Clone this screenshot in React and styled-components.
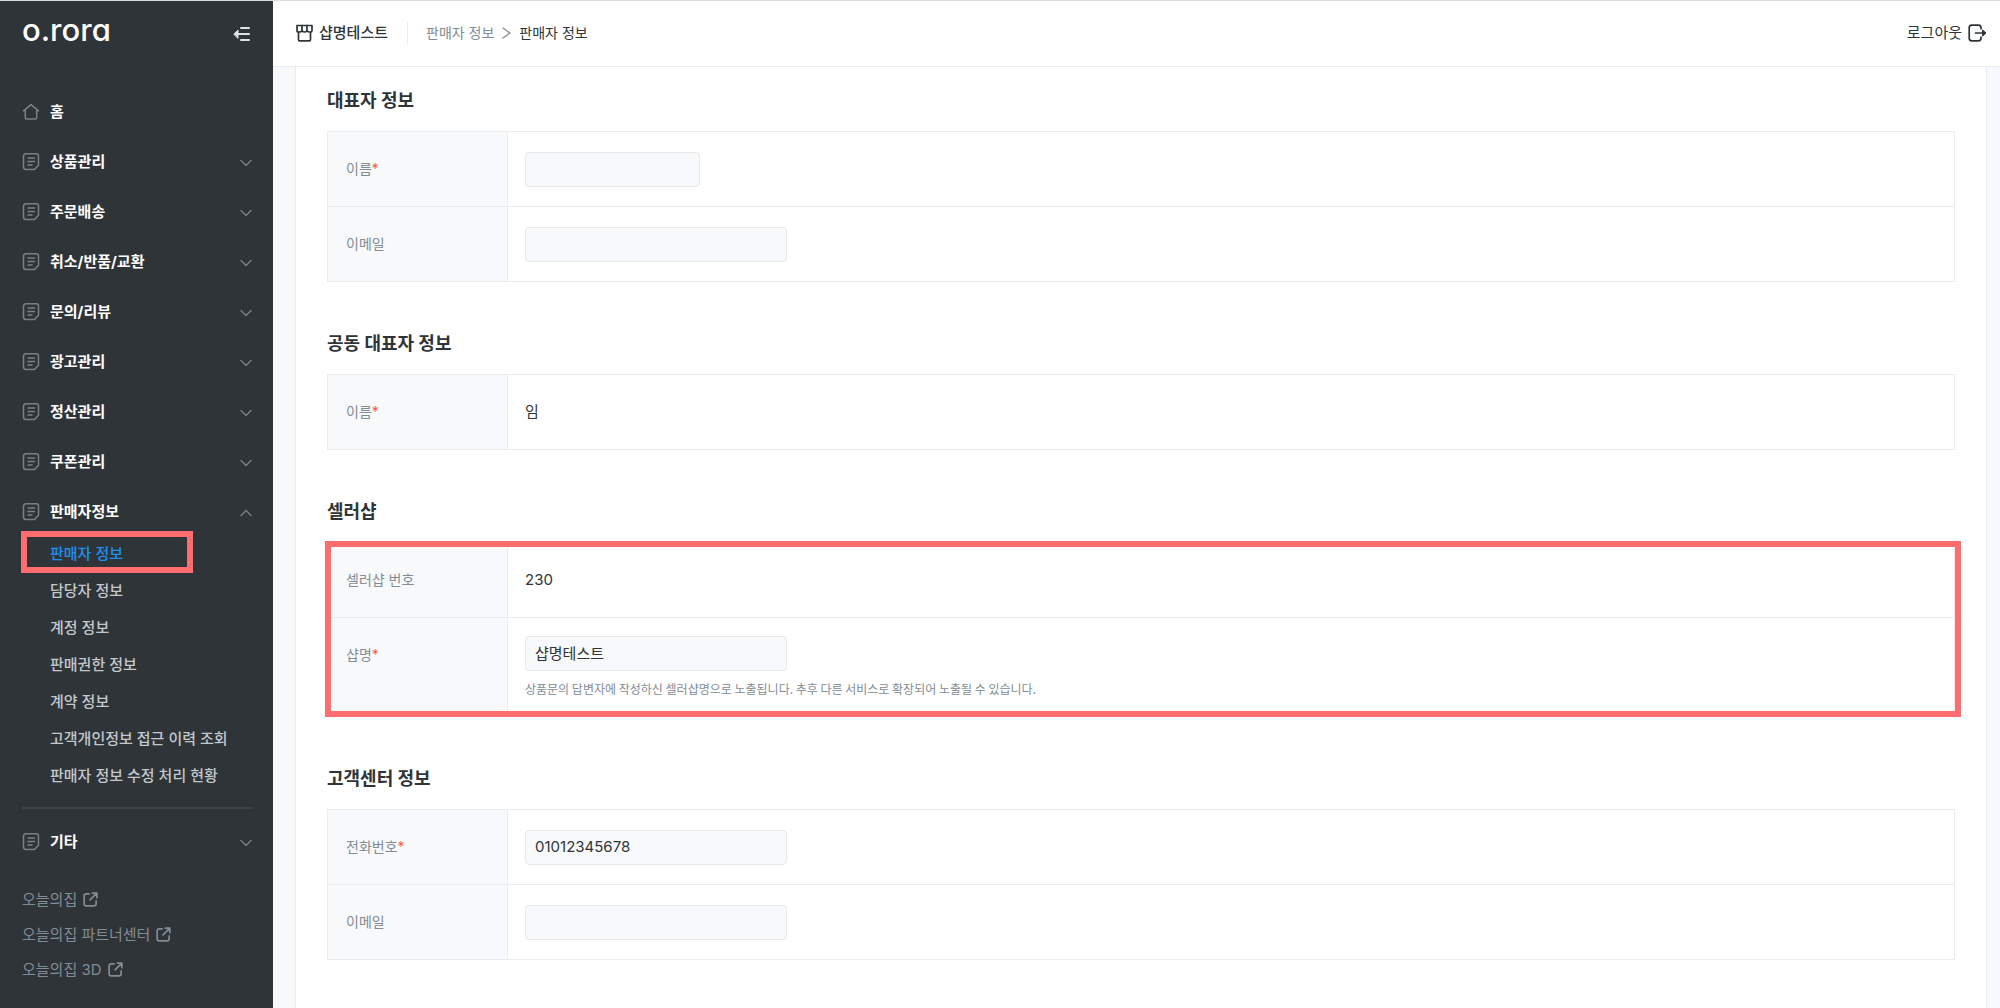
import React, { useState } from "react";
import styled, { createGlobalStyle, css } from "styled-components";

const GlobalStyle = createGlobalStyle`
  *, *::before, *::after { box-sizing: border-box; }
  body {
    margin: 0;
    background: #f8f9fb;
    color: #2f3438;
    font-family: Inter, "Noto Sans CJK KR", "Noto Sans", sans-serif;
    font-size: 14px;
    line-height: 22px;
  }
  button, input { font: inherit; color: inherit; }
  a { color: inherit; text-decoration: none; }
  svg { display: block; flex: none; }
`;

const Page = styled.div`
  display: flex;
  min-height: 100vh;
  border-top: 1px solid #dcdedd;
`;

/* ---------- sidebar ---------- */

const Sidebar = styled.aside`
  flex: none;
  width: 273px;
  padding: 0 21px 0 22px;
  background: #2f3438;
`;

const Brand = styled.div`
  display: flex;
  align-items: flex-start;
  justify-content: space-between;
  height: 91px;
  padding-top: 9px;
`;

const Logo = styled.a`
  color: #fff;
  font-size: 31px;
  font-weight: 500;
  line-height: 40px;
  font-feature-settings: "cv11";
`;

const PlainButton = styled.button`
  display: flex;
  align-items: center;
  padding: 0;
  border: 0;
  background: none;
  cursor: pointer;
`;

const CollapseButton = styled(PlainButton)`
  height: 48px;
  color: #dfe1e3;
`;

const NavList = styled.ul`
  display: flex;
  flex-direction: column;
  gap: 10px;
  margin: 0;
  padding: 0;
  list-style: none;
`;

const navRow = css`
  display: flex;
  align-items: center;
  gap: 10px;
  width: 100%;
  height: 40px;
  color: #fff;
  font-size: 15px;
  font-weight: 700;
  text-align: left;

  svg { color: #78818a; }
`;

const NavLink = styled.a`${navRow}`;
const NavButton = styled(PlainButton)`${navRow}`;

const NavLabel = styled.span`
  flex: 1;
`;

const SubList = styled.ul`
  margin: 3px 0 0;
  padding: 0;
  list-style: none;
`;

const SubItem = styled.li`
  position: relative;
  padding-left: 28px;
`;

const SubLink = styled.a`
  display: block;
  color: ${(p) => (p.$active ? "#1e90f0" : "#c2c8cc")};
  font-size: 15px;
  font-weight: 500;
  line-height: 37px;
`;

const Highlight = styled.span`
  position: absolute;
  inset: ${(p) => p.$inset};
  border: 6px solid #ff6e6e;
  pointer-events: none;
`;

const Divider = styled.hr`
  height: 2px;
  margin: 13px 0;
  border: 0;
  background: #3f4448;
`;

const ExternalList = styled.div`
  display: flex;
  flex-direction: column;
  align-items: flex-start;
  margin-top: 20px;
`;

const ExternalLink = styled.a`
  display: flex;
  align-items: center;
  gap: 6px;
  height: 35px;
  color: #828c94;
  font-size: 15px;
`;

/* ---------- header ---------- */

const Column = styled.div`
  display: flex;
  flex: 1;
  flex-direction: column;
  min-width: 0;
`;

const Header = styled.header`
  display: flex;
  align-items: center;
  height: 66px;
  padding: 0 13px 2px 23px;
  border-bottom: 1px solid #eaedef;
  background: #fff;
`;

const ShopName = styled.div`
  display: flex;
  align-items: center;
  gap: 6px;
  padding-right: 19px;
  font-size: 15px;
  font-weight: 500;
`;

const Breadcrumb = styled.nav`
  display: flex;
  align-items: center;
  gap: 8px;
  padding-left: 18px;
  border-left: 1px solid #eaedef;
  color: #828c94;
`;

const Current = styled.span`
  color: #2f3438;
`;

const Logout = styled(PlainButton)`
  gap: 6px;
  margin-left: auto;
  font-size: 15px;
`;

/* ---------- content ---------- */

const Main = styled.main`
  display: flex;
  flex: 1;
  padding: 0 13px 0 22px;
`;

const Card = styled.div`
  display: flex;
  flex: 1;
  flex-direction: column;
  gap: 49px;
  padding: 21px 31px 48px;
  border: 1px solid #eaedef;
  border-width: 0 1px;
  background: #fff;
`;

const Title = styled.h2`
  margin: 0 0 17px;
  font-size: 18px;
  font-weight: 700;
  line-height: 26px;
`;

const TableFrame = styled.div`
  position: relative;
`;

const Table = styled.table`
  width: 100%;
  border: 1px solid #eaedef;
  border-spacing: 0;

  tr + tr > * { border-top: 1px solid #eaedef; }
`;

const HeadCell = styled.th`
  width: 180px;
  padding: 26px 18px;
  border-right: 1px solid #eaedef;
  background: #f7f9fa;
  color: #828c94;
  font-weight: 400;
  text-align: left;
  vertical-align: top;
`;

const Cell = styled.td`
  padding: 18px 17px;
  font-size: 15px;
  vertical-align: middle;
`;

const Required = styled.span`
  color: #f55;
`;

const TextInput = styled.input`
  display: block;
  width: ${(p) => (p.$short ? 175 : 262)}px;
  height: 35px;
  padding: 0 9px 2px;
  border: 1px solid #e6e8ea;
  border-radius: 4px;
  background: #f7f9fa;
  outline: 0;
`;

const Hint = styled.p`
  margin: 9px 0 0;
  color: #828c94;
  font-family: "Noto Sans CJK KR", "Noto Sans", sans-serif;
  font-size: 12px;
  line-height: 18px;
`;

/* ---------- icons ---------- */

const stroke = {
  fill: "none",
  stroke: "currentColor",
  strokeLinecap: "round",
  strokeLinejoin: "round",
  "aria-hidden": true,
};

const CollapseIcon = () => (
  <svg width="19" height="16" viewBox="0 0 19 16" {...stroke} strokeWidth="2">
    <path d="M8 2h8M3 8h13M8 14h8" />
    <path d="M1 8l4-4v8z" fill="currentColor" strokeWidth="1" />
  </svg>
);

const HomeIcon = () => (
  <svg width="18" height="18" viewBox="0 0 18 18" {...stroke} strokeWidth="1.5">
    <path d="M1.5 7.8 9 1.6l7.500 6.200M3.300 6.600v8.400q0 1 1 1h9.400q1 0 1-1V6.600" />
  </svg>
);

const DocIcon = () => (
  <svg width="18" height="18" viewBox="0 0 18 18" {...stroke} strokeWidth="1.5">
    <path d="M4 .8h10.500q2 0 2 2v9.500l-4 4.200H4q-2.500 0-2.500-2.500v-10.700Q1.500 .8 4 .8z" />
    <path d="M6 5h6.500M6 8.500h6.500M6 12h4" />
  </svg>
);

const ChevronIcon = ({ up }) => (
  <svg width="12" height="10" viewBox="0 0 12 10" {...stroke} strokeWidth="1.4">
    <path d={up ? "M1 8.500l5-5 5 5" : "M1 3.500l5 5 5-5"} />
  </svg>
);

const ExternalIcon = () => (
  <svg width="15" height="15" viewBox="0 0 16 16" {...stroke} strokeWidth="1.8">
    <path d="M6.500 2H3.500Q1.200 2 1.200 4.300v8.200q0 2.300 2.300 2.300h8.200q2.300 0 2.300-2.300V9.500" />
    <path d="M10 1.200h4.800V6M14.500 1.500 7.500 8.500" />
  </svg>
);

const StoreIcon = () => (
  <svg width="17" height="18" viewBox="0 0 17 18" {...stroke} strokeWidth="1.700">
    <path d="M1 1.500h15v5.200q0 1.300-1.300 1.300h-1.200q-1.500 0-2.500-1.300Q10 8 8.500 8T6 6.700Q5 8 3.500 8H2.300Q1 8 1 6.700z" />
    <path d="M6 1.500v5.200M11 1.500v5.200M2.500 8v7.700q0 1.100 1.100 1.100h9.800q1.100 0 1.100-1.100V8" />
  </svg>
);

const CrumbIcon = () => (
  <svg width="9" height="12" viewBox="0 0 9 12" {...stroke} strokeWidth="1.300">
    <path d="M1 1l7 5-7 5" />
  </svg>
);

const LogoutIcon = () => (
  <svg width="19" height="18" viewBox="0 0 19 18" {...stroke} strokeWidth="1.700">
    <path d="M13 4.800V3.800Q13 1.200 10.400 1.200H3.800Q1.200 1.200 1.200 3.800v10.400q0 2.600 2.600 2.600h6.600q2.600 0 2.600-2.600v-1" />
    <path d="M7.500 9H15" />
    <path d="M14.800 6.200 18 9 14.800 11.800z" fill="currentColor" strokeWidth="1" />
  </svg>
);

/* ---------- data ---------- */

const groups = ["상품관리", "주문배송", "취소/반품/교환", "문의/리뷰", "광고관리", "정산관리", "쿠폰관리"];

const sellerPages = [
  "판매자 정보",
  "담당자 정보",
  "계정 정보",
  "판매권한 정보",
  "계약 정보",
  "고객개인정보 접근 이력 조회",
  "판매자 정보 수정 처리 현황",
];

const externals = ["오늘의집", "오늘의집 파트너센터", "오늘의집 3D"];

const sections = [
  {
    title: "대표자 정보",
    rows: [
      { id: "ceo-name", label: "이름", required: true, input: "", short: true },
      { id: "ceo-email", label: "이메일", input: "" },
    ],
  },
  {
    title: "공동 대표자 정보",
    rows: [{ id: "co-name", label: "이름", required: true, text: "임" }],
  },
  {
    title: "셀러샵",
    highlighted: true,
    rows: [
      { id: "shop-no", label: "셀러샵 번호", text: "230" },
      {
        id: "shop-name",
        label: "샵명",
        required: true,
        input: "샵명테스트",
        hint: "상품문의 답변자에 작성하신 셀러샵명으로 노출됩니다. 추후 다른 서비스로 확장되어 노출될 수 있습니다.",
      },
    ],
  },
  {
    title: "고객센터 정보",
    rows: [
      { id: "cs-phone", label: "전화번호", required: true, input: "01012345678" },
      { id: "cs-email", label: "이메일", input: "" },
    ],
  },
];

const NavGroup = ({ label, open = false, onClick }) => (
  <NavButton type="button" aria-expanded={open} onClick={onClick}>
    <DocIcon />
    <NavLabel>{label}</NavLabel>
    <ChevronIcon up={open} />
  </NavButton>
);

const FormRow = ({ row }) => {
  const isField = row.input !== undefined;
  const label = (
    <>
      {row.label}
      {row.required && <Required>*</Required>}
    </>
  );
  return (
    <tr>
      <HeadCell scope="row">{isField ? <label htmlFor={row.id}>{label}</label> : label}</HeadCell>
      <Cell>
        {isField ? <TextInput id={row.id} defaultValue={row.input} $short={row.short} readOnly /> : row.text}
        {row.hint && <Hint>{row.hint}</Hint>}
      </Cell>
    </tr>
  );
};

export default function App() {
  const [open, setOpen] = useState(true);

  return (
    <>
      <GlobalStyle />
      <Page>
        <Sidebar>
          <Brand>
            <Logo href="#">o.rora</Logo>
            <CollapseButton type="button" aria-label="메뉴 접기">
              <CollapseIcon />
            </CollapseButton>
          </Brand>
          <nav>
            <NavList>
              <li>
                <NavLink href="#">
                  <HomeIcon />
                  <NavLabel>홈</NavLabel>
                </NavLink>
              </li>
              {groups.map((g) => (
                <li key={g}>
                  <NavGroup label={g} />
                </li>
              ))}
              <li>
                <NavGroup label="판매자정보" open={open} onClick={() => setOpen(!open)} />
                {open && (
                  <SubList>
                    {sellerPages.map((p, i) => (
                      <SubItem key={p}>
                        <SubLink href="#" $active={i === 0}>
                          {p}
                        </SubLink>
                        {i === 0 && <Highlight $inset="-4px 59px -1px -1px" />}
                      </SubItem>
                    ))}
                  </SubList>
                )}
              </li>
            </NavList>
            <Divider />
            <NavGroup label="기타" />
          </nav>
          <ExternalList>
            {externals.map((e) => (
              <ExternalLink key={e} href="#">
                {e}
                <ExternalIcon />
              </ExternalLink>
            ))}
          </ExternalList>
        </Sidebar>
        <Column>
          <Header>
            <ShopName>
              <StoreIcon />
              샵명테스트
            </ShopName>
            <Breadcrumb>
              <a href="#">판매자 정보</a>
              <CrumbIcon />
              <Current>판매자 정보</Current>
            </Breadcrumb>
            <Logout type="button">
              로그아웃
              <LogoutIcon />
            </Logout>
          </Header>
          <Main>
            <Card>
              {sections.map((s) => (
                <section key={s.title}>
                  <Title>{s.title}</Title>
                  <TableFrame>
                    <Table>
                      <tbody>
                        {s.rows.map((r) => (
                          <FormRow key={r.id} row={r} />
                        ))}
                      </tbody>
                    </Table>
                    {s.highlighted && <Highlight $inset="-1px -6px 0 -2px" />}
                  </TableFrame>
                </section>
              ))}
            </Card>
          </Main>
        </Column>
      </Page>
    </>
  );
}
